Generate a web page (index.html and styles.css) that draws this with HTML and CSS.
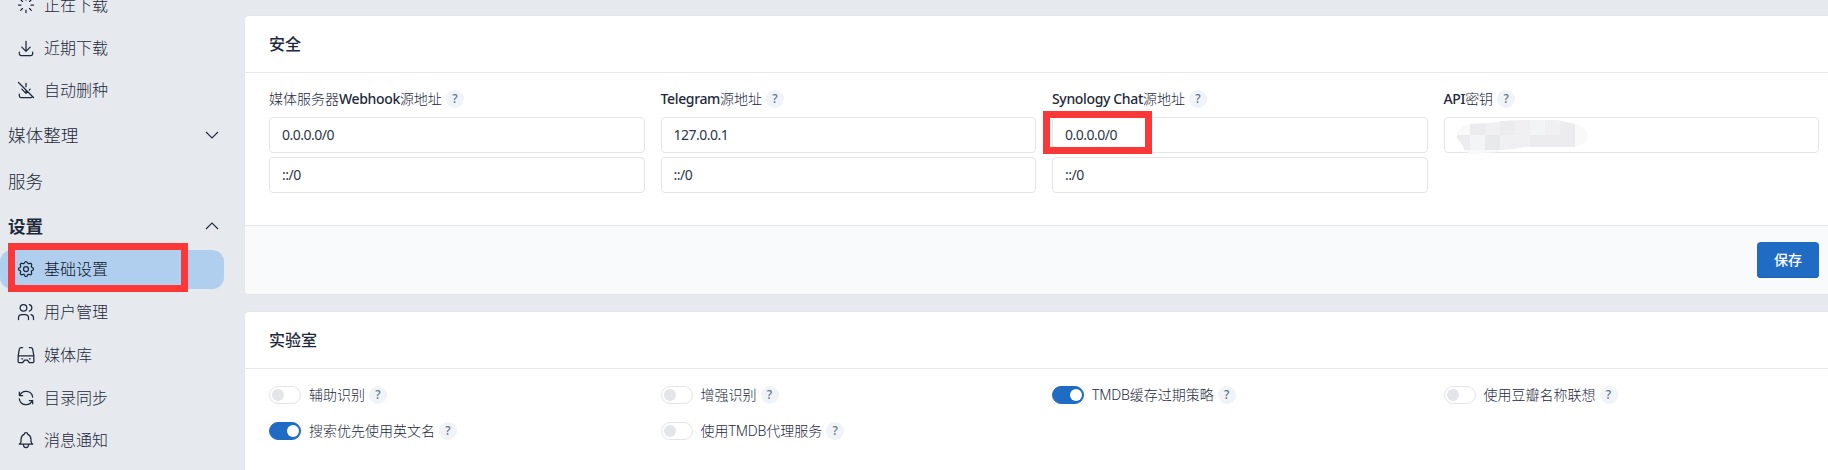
FILE: index.html
```html
<!DOCTYPE html>
<html lang="zh-CN">
<head>
<meta charset="utf-8">
<title>基础设置</title>
<link rel="stylesheet" href="styles.css">
</head>
<body>
<div class="app">
  <nav class="sidebar">
    <a class="item"><svg class="icon" viewBox="0 0 24 24"><path d="M12 6V3M16.25 7.75l2.15-2.15M18 12h3M16.25 16.25l2.15 2.15M12 18v3M7.75 16.25L5.6 18.4M6 12H3M7.75 7.75L5.6 5.6"/></svg>正在下载</a>
    <a class="item"><svg class="icon" viewBox="0 0 24 24"><path d="M4 17v2a2 2 0 0 0 2 2h12a2 2 0 0 0 2-2v-2M7 11l5 5 5-5M12 4v12"/></svg>近期下载</a>
    <a class="item"><svg class="icon" viewBox="0 0 24 24"><path d="M4 17v2a2 2 0 0 0 2 2h12a2 2 0 0 0 1.83-1.19M7 11l5 5 2-2m2-2l1-1M12 4v4m0 4v4M3 3l18 18"/></svg>自动删种</a>
    <a class="group">媒体整理<svg class="chevron" viewBox="0 0 14 8"><path d="M1 1l6 6 6-6"/></svg></a>
    <a class="group">服务</a>
    <a class="group open">设置<svg class="chevron" viewBox="0 0 14 8"><path d="M1 7l6-6 6 6"/></svg></a>
    <a class="item active"><svg class="icon" viewBox="0 0 24 24"><path d="M10.325 4.317c.426-1.756 2.924-1.756 3.35 0a1.724 1.724 0 0 0 2.573 1.066c1.543-.94 3.31.826 2.37 2.37a1.724 1.724 0 0 0 1.065 2.572c1.756.426 1.756 2.924 0 3.35a1.724 1.724 0 0 0-1.066 2.573c.94 1.543-.826 3.31-2.37 2.37a1.724 1.724 0 0 0-2.572 1.065c-.426 1.756-2.924 1.756-3.35 0a1.724 1.724 0 0 0-2.573-1.066c-1.543.94-3.31-.826-2.37-2.37a1.724 1.724 0 0 0-1.065-2.572c-1.756-.426-1.756-2.924 0-3.35a1.724 1.724 0 0 0 1.066-2.573c-.94-1.543.826-3.31 2.37-2.37 1 .608 2.296.07 2.572-1.065z"/><circle cx="12" cy="12" r="3"/></svg>基础设置<span class="mark mark-nav"></span></a>
    <a class="item"><svg class="icon" viewBox="0 0 24 24"><circle cx="9" cy="7" r="4"/><path d="M3 21v-2a4 4 0 0 1 4-4h4a4 4 0 0 1 4 4v2M16 3.13a4 4 0 0 1 0 7.75M21 21v-2a4 4 0 0 0-3-3.85"/></svg>用户管理</a>
    <a class="item"><svg class="icon" viewBox="0 0 24 24"><path d="M8 3H6Q4.500 3 4 5L2.600 13v7a1 1 0 0 0 1 1H8l2.500-3h3l2.500 3h4.400a1 1 0 0 0 1-1v-7L20 5q-.5-2-2-2h-2M2.600 13h18.800M7 16.500h1M16 16.500h1"/></svg>媒体库</a>
    <a class="item"><svg class="icon" viewBox="0 0 24 24"><path d="M20 11A8.100 8.100 0 0 0 4.500 9M4 5v4h4M4 13a8.100 8.100 0 0 0 15.500 2m.5 4v-4h-4"/></svg>目录同步</a>
    <a class="item"><svg class="icon" viewBox="0 0 24 24"><path d="M10 5a2 2 0 0 1 4 0 7 7 0 0 1 4 6v3a4 4 0 0 0 2 3H4a4 4 0 0 0 2-3v-3a7 7 0 0 1 4-6M9 17v1a3 3 0 0 0 6 0v-1"/></svg>消息通知</a>
  </nav>
  <main class="content">
    <section class="card security">
      <h3 class="card-header">安全</h3>
      <div class="card-body fields">
        <div class="field"><label class="label">媒体服务器<span class="latin">Webhook</span>源地址<span class="help">?</span></label><input class="input" value="0.0.0.0/0"><input class="input" value="::/0"></div>
        <div class="field"><label class="label"><span class="latin">Telegram</span>源地址<span class="help">?</span></label><input class="input" value="127.0.0.1"><input class="input" value="::/0"></div>
        <div class="field"><label class="label"><span class="latin">Synology Chat</span>源地址<span class="help">?</span></label><div class="marked"><input class="input" value="0.0.0.0/0"><span class="mark mark-field"></span></div><input class="input" value="::/0"></div>
        <div class="field"><label class="label"><span class="latin">API</span>密钥<span class="help">?</span></label><div class="marked"><input class="input" value=""><svg class="mosaic" viewBox="0 0 132 34"><defs><clipPath id="smear"><path d="M0 18V12L6 6l6-2 20-1 14-2 20-1h34l18 4 8 3 5 6v6l-5 5-7 3H67l-10 2-15 1v2l-18 1v1H11v-2H8L6 26z"/></clipPath></defs><g clip-path="url(#smear)"><path fill="#f9f9fa" d="M0 0h132v34H0z"/><path fill="#ececee" d="M13 0h15v15H13zM0 15h13v15H0zM43 0h15v15H43zM73 15h30v15H73zM103 0h15v30h-15z"/><path fill="#f0f0f2" d="M28 0h15v15H28zM58 0h15v30H58zM88 0h15v15H88zM43 15h15v15H43z"/><path fill="#f3f4f6" d="M13 15h15v15H13zM73 0h15v15H73z"/><path fill="#e8e9eb" d="M28 15h15v15H28z"/></g></svg></div></div>
      </div>
      <div class="card-footer"><button class="save">保存</button></div>
    </section>
    <section class="card">
      <h3 class="card-header">实验室</h3>
      <div class="card-body switches">
        <label class="switch"><span class="track"></span>辅助识别<span class="help">?</span></label>
        <label class="switch"><span class="track"></span>增强识别<span class="help">?</span></label>
        <label class="switch"><span class="track on"></span><span class="latin">TMDB</span>缓存过期策略<span class="help">?</span></label>
        <label class="switch"><span class="track"></span>使用豆瓣名称联想<span class="help">?</span></label>
        <label class="switch"><span class="track on"></span>搜索优先使用英文名<span class="help">?</span></label>
        <label class="switch"><span class="track"></span>使用<span class="latin">TMDB</span>代理服务<span class="help">?</span></label>
      </div>
    </section>
  </main>
</div>
</body>
</html>
```
FILE: styles.css
```css
* { box-sizing: border-box; }
body {
  margin: 0;
  height: 470px;
  overflow: hidden;
  background: #e6e9ee;
  color: #1e293b;
  font: 400 14px/20px "Noto Sans", "Noto Sans CJK SC", sans-serif;
}
.app { display: flex; height: 470px; overflow: hidden; }

.sidebar { flex: none; width: 245px; margin-top: -14.6px; }
.item {
  position: relative;
  display: flex;
  align-items: center;
  width: 224px;
  height: 39px;
  margin-bottom: 3.7px;
  padding-left: 16px;
  font-size: 16px;
  font-weight: 300;
  border-radius: 0 12px 12px 0;
}
.item.active { background: #b0ceed; color: #0f172a; border-radius: 12px; }
.icon {
  width: 20px;
  height: 20px;
  margin-right: 8px;
  fill: none;
  stroke: #1e293b;
  stroke-width: 1.5;
  stroke-linecap: round;
  stroke-linejoin: round;
}
.group {
  display: flex;
  align-items: center;
  justify-content: space-between;
  width: 219px;
  height: 45.5px;
  padding: 0 0 2px 8px;
  font-size: 17.6px;
  font-weight: 300;
}
.group.open { font-weight: 700; }
.chevron { width: 14px; height: 8px; fill: none; stroke: #1e293b; stroke-width: 1.1; }

.mark { position: absolute; border: 7px solid #fc3737; pointer-events: none; }
.mark-nav { left: 8px; top: -7px; width: 180px; height: 49px; }
.mark-field { left: -9px; top: -6px; width: 109px; height: 43px; }

.content {
  flex: none;
  display: flex;
  flex-direction: column;
  gap: 18px;
  width: 1598px;
  padding-top: 16px;
}
.card { flex: none; background: #fff; border-radius: 4px; box-shadow: 0 0 1px rgba(30, 41, 59, .15); overflow: hidden; }
.card-header {
  height: 57px;
  margin: 0;
  padding: 0 24px;
  border-bottom: 1px solid #e6e7e9;
  font-size: 16px;
  font-weight: 500;
  line-height: 56px;
}
.card-body { display: grid; grid-template-columns: repeat(4, 1fr); padding: 0 24px; }
.fields { column-gap: 16px; height: 152px; padding-top: 16px; }
.field { display: flex; flex-direction: column; gap: 4px; }
.label { display: flex; align-items: center; height: 20px; margin-bottom: 4px; font-weight: 300; white-space: pre; }
.label .latin { font-weight: 500; letter-spacing: -.35px; }
.help {
  width: 18px;
  height: 18px;
  margin-left: 4px;
  border-radius: 50%;
  background: #f0f3f8;
  color: #667382;
  font-size: 12px;
  font-weight: 500;
  line-height: 18px;
  text-align: center;
}
.input {
  display: block;
  width: 100%;
  height: 36px;
  padding: 0 12px 2px;
  border: 1px solid #e4e5e8;
  border-radius: 4px;
  background: #fff;
  color: #2c3648;
  font: inherit;
  letter-spacing: -.5px;
}
.marked { position: relative; }
.mosaic { position: absolute; left: 13px; top: 3px; width: 132px; height: 34px; }
.card-footer {
  display: flex;
  align-items: center;
  justify-content: flex-end;
  height: 69px;
  padding: 0 24px;
  border-top: 1px solid #e6e7e9;
  background: #f9fafc;
}
.save {
  width: 62px;
  height: 36px;
  padding: 0;
  border: 0;
  border-radius: 4px;
  background: #206bc4;
  box-shadow: inset 0 -1px 0 #1d5fae;
  color: #fff;
  font: inherit;
  font-weight: 500;
}
.switches { column-gap: 16px; row-gap: 16px; padding-top: 16px; height: 120px; align-content: start; }
.switch { display: flex; align-items: center; height: 20px; font-weight: 300; }
.switch .latin { letter-spacing: -.2px; }
.track {
  display: flex;
  align-items: center;
  width: 32px;
  height: 18px;
  margin-right: 8px;
  padding: 0 2px;
  border: 1px solid #e4e5e8;
  border-radius: 9px;
}
.track::before { content: ""; width: 12px; height: 12px; border-radius: 50%; background: #e4e5e8; }
.track.on { justify-content: flex-end; padding-right: 1px; border-color: #206bc4; background: #206bc4; }
.track.on::before { background: #fff; }
```
